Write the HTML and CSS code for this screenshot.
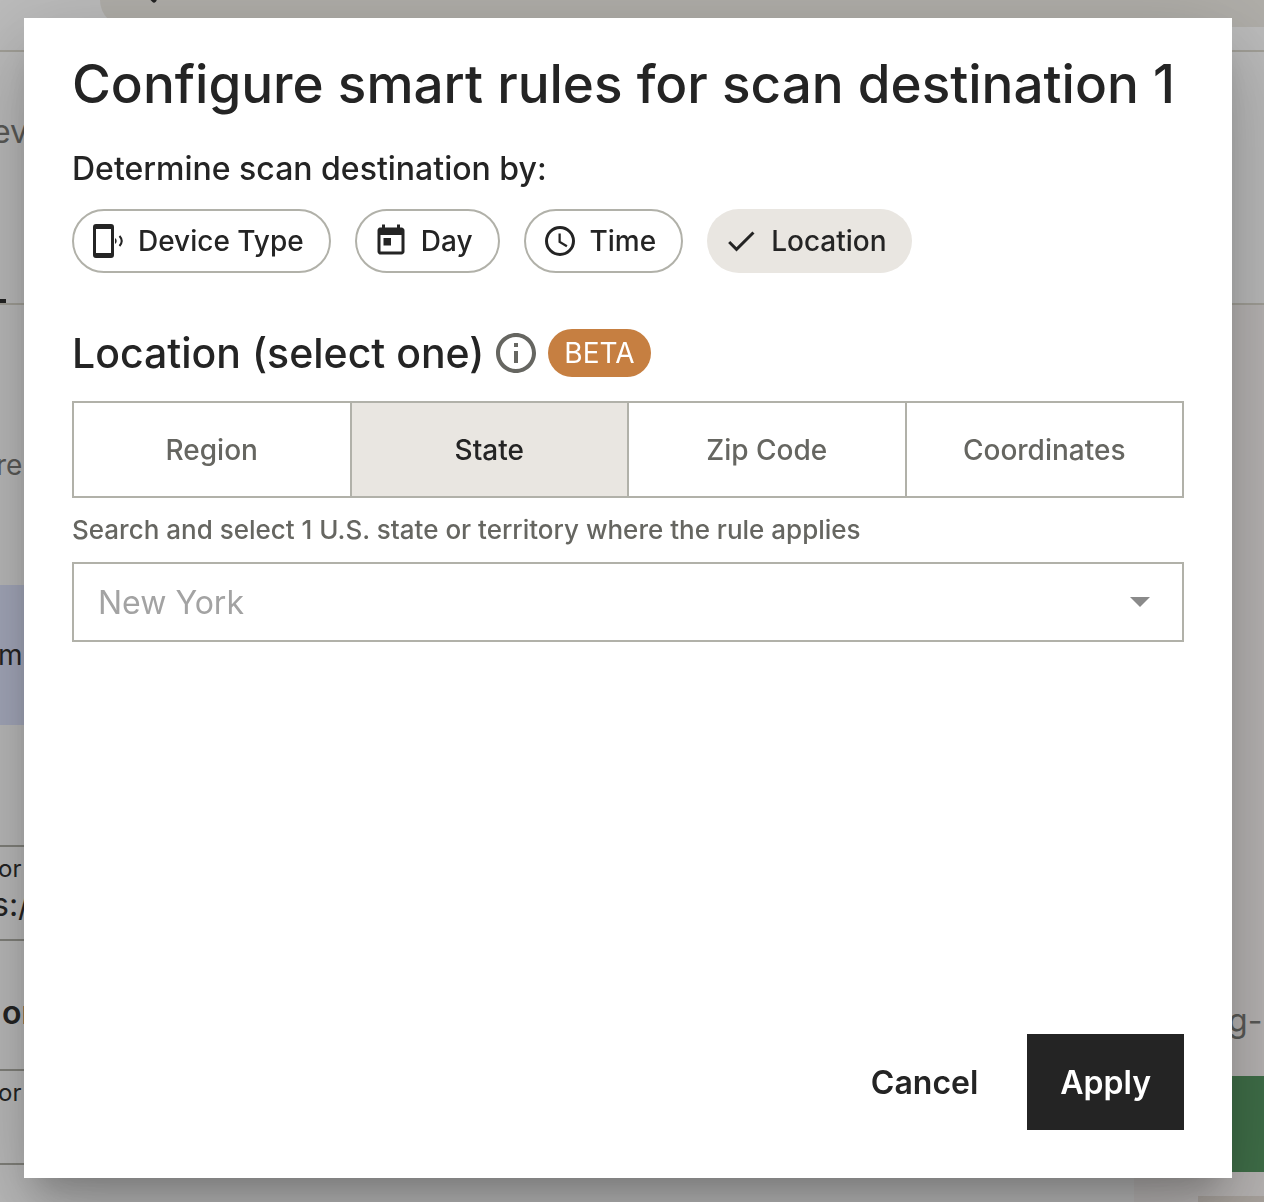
FILE: index.html
```html
<!DOCTYPE html>
<html lang="en">
<head>
    <meta charset="UTF-8">
    <meta name="viewport" content="width=device-width, initial-scale=1.0">
    <title>Configure smart rules</title>
    <link rel="stylesheet" href="styles.css">
</head>
<body>
    <div class="page">
        <header class="topbar">
            <div class="search">
                <svg width="12" height="12" viewBox="0 0 12 12"><path d="M1 -7L8 0" stroke="#242424" stroke-width="5" stroke-linecap="round"/></svg>
            </div>
        </header>
        <nav class="subnav">
            <span class="crumb">ev</span>
            <span class="tab-line"></span>
        </nav>
        <div class="content">
            <div class="form-side">
                <p class="muted">re</p>
                <div class="banner">m</div>
                <div class="field">
                    <span>or</span>
                    <span class="field-value">s:/</span>
                </div>
                <h4>on</h4>
                <div class="field"><span>or</span></div>
            </div>
            <div class="preview-side">
                <p>g-p</p>
                <div class="green-bar"></div>
                <div class="preview-card"></div>
            </div>
        </div>
    </div>

    <div class="overlay">
        <div class="dialog" role="dialog" aria-labelledby="dialogTitle">
            <h1 id="dialogTitle">Configure smart rules for scan destination 1</h1>

            <h2>Determine scan destination by:</h2>
            <div class="chips">
                <button class="chip">
                    <svg viewBox="0 0 36 36">
                        <path fill-rule="evenodd" d="M6 1h15a3 3 0 0 1 3 3v28a3 3 0 0 1-3 3H6a3 3 0 0 1-3-3V4a3 3 0 0 1 3-3zm0 5v24h15V6z"/>
                        <path d="M25 15a3.500 3.500 0 0 1 0 6z"/>
                        <path d="M29.500 13q4.500 5 0 10" fill="none" stroke="#242424" stroke-width="2"/>
                    </svg>
                    Device Type
                </button>
                <button class="chip">
                    <svg viewBox="0 0 24 24"><path d="M19 3h-1V1h-2v2H8V1H6v2H5c-1.110 0-1.990.9-1.990 2L3 19c0 1.100.89 2 2 2h14c1.100 0 2-.9 2-2V5c0-1.100-.9-2-2-2zm0 16H5V8h14v11zM7 10h5v5H7z"/></svg>
                    Day
                </button>
                <button class="chip">
                    <svg viewBox="0 0 24 24">
                        <circle cx="12" cy="12" r="9" fill="none" stroke="#242424" stroke-width="2"/>
                        <path d="M12.500 7H11v6l5.200 3.200.8-1.300-4.500-2.700z"/>
                    </svg>
                    Time
                </button>
                <button class="chip selected">
                    <svg viewBox="0 0 24 24"><path d="M9 16.170L4.830 12l-1.420 1.410L9 19 21 7l-1.410-1.410z"/></svg>
                    Location
                </button>
            </div>

            <div class="section-title">
                <h3>Location (select one)</h3>
                <svg viewBox="0 0 24 24"><path d="M11 7h2v2h-2zm0 4h2v6h-2zm1-9C6.480 2 2 6.480 2 12s4.480 10 10 10 10-4.480 10-10S17.520 2 12 2zm0 18c-4.410 0-8-3.590-8-8s3.590-8 8-8 8 3.590 8 8-3.590 8-8 8z"/></svg>
                <span class="badge">BETA</span>
            </div>
            <div class="segments">
                <button>Region</button>
                <button class="active">State</button>
                <button>Zip Code</button>
                <button>Coordinates</button>
            </div>

            <label for="stateSelect">Search and select 1 U.S. state or territory where the rule applies</label>
            <div class="select-box">
                <select id="stateSelect">
                    <option>New York</option>
                </select>
                <svg width="20" height="10" viewBox="0 0 20 10"><path d="M0 0h20L10 10z"/></svg>
            </div>

            <div class="actions">
                <button class="cancel">Cancel</button>
                <button class="apply">Apply</button>
            </div>
        </div>
    </div>
</body>
</html>
```

FILE: styles.css
```css
* {
    box-sizing: border-box;
}
body {
    margin: 0;
    font-family: Inter, 'Liberation Sans', sans-serif;
    color: #242424;
    background-color: #bdbdbd;
}
h1, h2, h3, h4, p {
    margin: 0;
    font-weight: 500;
}
button, select {
    font-family: inherit;
    color: inherit;
    cursor: pointer;
}

/* page behind the dialog */
.page {
    height: 100vh;
    overflow: hidden;
    display: flex;
    flex-direction: column;
}
.topbar {
    height: 52px;
    flex-shrink: 0;
    padding-left: 100px;
    border-bottom: 2px solid #a3a199;
}
.search {
    height: 27px;
    padding-left: 46px;
    background-color: #b1afaa;
    border-bottom-left-radius: 36px;
}
.search svg {
    display: block;
}
.subnav {
    height: 253px;
    flex-shrink: 0;
    display: flex;
    flex-direction: column;
    justify-content: space-between;
    padding-top: 60px;
    border-bottom: 2px solid #a3a199;
}
.crumb {
    font-size: 32px;
    line-height: 40px;
    text-indent: -8px;
    color: #5b5b58;
}
.tab-line {
    width: 6px;
    height: 4px;
    background-color: #242424;
}
.content {
    flex: 1;
    display: flex;
}
.form-side {
    flex: 1;
    text-indent: -2px;
}
.form-side .muted {
    padding-top: 140px;
    font-size: 28px;
    line-height: 40px;
    font-weight: 400;
    text-indent: -4px;
    color: #5b5b58;
}
.banner {
    height: 140px;
    margin-top: 100px;
    font-size: 28px;
    line-height: 140px;
    background-color: #a6aabd;
}
.field {
    height: 96px;
    margin-top: 120px;
    padding-top: 8px;
    border-top: 2px solid #83837d;
    border-bottom: 2px solid #83837d;
    font-size: 24px;
    line-height: 28px;
}
.field span {
    display: block;
}
.field .field-value {
    font-size: 32px;
    line-height: 44px;
    text-indent: -8px;
}
.form-side h4 {
    padding-top: 52px;
    font-size: 32px;
    line-height: 40px;
    font-weight: 600;
    text-indent: 2px;
}
.form-side h4 + .field {
    margin-top: 36px;
}
.preview-side {
    width: 130px;
    padding-top: 696px;
    background-color: #bab7b6;
}
.preview-side p {
    padding-left: 94px;
    font-size: 32px;
    line-height: 40px;
    font-weight: 400;
    white-space: nowrap;
    color: #5b5b58;
}
.green-bar {
    height: 96px;
    margin: 35px 0 0 64px;
    background-color: #407049;
}
.preview-card {
    height: 40px;
    margin: 24px 0 0 64px;
    background-color: #aba59f;
}

/* dialog */
.overlay {
    position: fixed;
    inset: 0;
    display: flex;
    padding: 18px 32px 24px 24px;
}
.dialog {
    flex: 1;
    display: flex;
    flex-direction: column;
    padding: 36px 48px 48px;
    background-color: #fff;
    box-shadow: 0 22px 30px -14px rgba(0, 0, 0, 0.2),
                0 48px 76px 6px rgba(0, 0, 0, 0.14),
                0 18px 92px 16px rgba(0, 0, 0, 0.12);
}
h1 {
    font-size: 53px;
    line-height: 60px;
    white-space: nowrap;
}
h2 {
    margin-top: 33px;
    font-size: 32px;
    line-height: 44px;
}
.chips {
    display: flex;
    gap: 24px;
    margin-top: 18px;
}
.chip {
    display: flex;
    align-items: center;
    gap: 12px;
    height: 64px;
    padding: 0 25px 0 16px;
    border: 2px solid #b1b1a9;
    border-radius: 32px;
    background-color: #fff;
    font-size: 28px;
    font-weight: 500;
}
.chip svg {
    width: 36px;
    height: 36px;
    fill: #242424;
}
.chip.selected {
    background-color: #e9e6e1;
    border: none;
}
.section-title {
    display: flex;
    align-items: center;
    gap: 8px;
    margin-top: 56px;
}
h3 {
    font-size: 41px;
    line-height: 48px;
}
.section-title svg {
    width: 48px;
    height: 48px;
    fill: #666661;
}
.badge {
    padding: 0 16px;
    border-radius: 24px;
    background-color: #c67f41;
    color: #fff;
    font-size: 28px;
    line-height: 48px;
}
.segments {
    display: flex;
    margin-top: 24px;
    border: 2px solid #b1b1a9;
}
.segments button {
    flex: 1;
    height: 93px;
    padding: 0;
    border: none;
    background-color: #fff;
    color: #666661;
    font-size: 28px;
    font-weight: 500;
}
.segments button + button {
    border-left: 2px solid #b1b1a9;
}
.segments .active {
    background-color: #e9e6e1;
    color: #242424;
}
label {
    margin-top: 16px;
    font-size: 26px;
    line-height: 32px;
    font-weight: 500;
    color: #666661;
}
.select-box {
    display: grid;
    align-items: center;
    margin-top: 16px;
}
.select-box select, .select-box svg {
    grid-area: 1 / 1;
}
.select-box select {
    appearance: none;
    width: 100%;
    height: 80px;
    padding: 0 24px;
    border: 2px solid #b1b1a9;
    border-radius: 0;
    background-color: #fff;
    color: #a3a3a3;
    font-size: 32px;
}
.select-box svg {
    justify-self: end;
    margin-right: 34px;
    fill: #8a8a8a;
    pointer-events: none;
}
.actions {
    display: flex;
    justify-content: flex-end;
    gap: 16px;
    margin-top: auto;
}
.actions button {
    height: 96px;
    padding: 0 33px;
    border: none;
    background-color: #fff;
    font-size: 32px;
    font-weight: 600;
}
.actions .apply {
    background-color: #242424;
    color: #fff;
}
```
